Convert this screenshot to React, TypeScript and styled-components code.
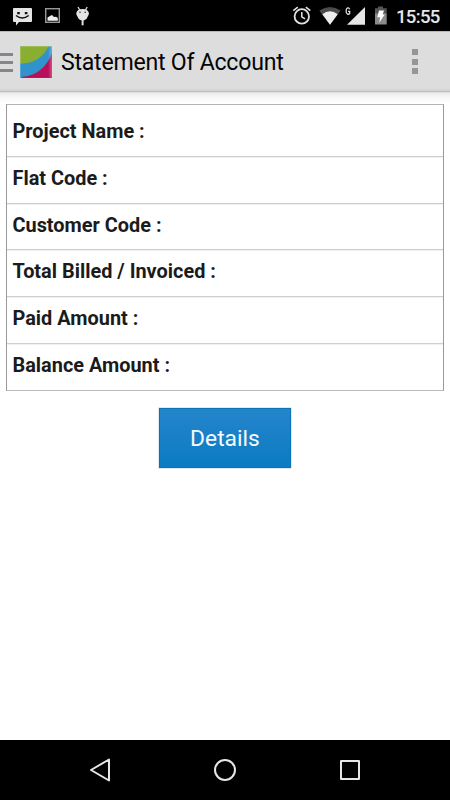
import React from 'react';
import styled, { createGlobalStyle } from 'styled-components';

const GlobalStyle = createGlobalStyle`
  * { box-sizing: border-box; }
  body { margin: 0; background: #fff; font-family: Roboto, "Liberation Sans", sans-serif; }
`;

const Screen = styled.div`
  display: flex;
  flex-direction: column;
  width: 450px;
  height: 800px;
  overflow: hidden;
  background: #fff;
`;

const StatusBar = styled.header`
  display: flex;
  flex: none;
  justify-content: space-between;
  height: 31px;
  background: #000;
`;

const Clock = styled.time`
  width: 54px;
  color: #e6e6e6;
  font-size: 18.6px;
  font-weight: 500;
  letter-spacing: -0.7px;
  line-height: 34px;
  white-space: nowrap;
`;

const StatusGroup = styled.div`
  display: flex;
`;

const AppBar = styled.div`
  display: flex;
  flex: none;
  align-items: center;
  height: 61px;
  padding-top: 1px;
  background: #ddd;
  border-top: 1px solid #b8b8b8;
  border-bottom: 1px solid #bebebe;
  box-shadow: inset 0 -2px 0 #d5d5d5;
`;

const DrawerIcon = styled.div`
  display: flex;
  flex-direction: column;
  gap: 5px;
  width: 13px;
  margin-right: 7px;
`;

const DrawerLine = styled.span`
  height: 3px;
  background: #86868a;
`;

const Title = styled.h1`
  flex: 1;
  margin: 1px 0 0 9px;
  color: #050505;
  font-size: 23.1px;
  font-weight: 400;
  letter-spacing: -0.24px;
  line-height: 30px;
  white-space: nowrap;
`;

const OverflowMenu = styled.button`
  display: flex;
  flex-direction: column;
  gap: 3.5px;
  margin: 0 32px 1px 0;
  padding: 0;
  border: 0;
  background: none;
`;

const Dot = styled.span`
  width: 6px;
  height: 6px;
  background: #969696;
`;

const Content = styled.main`
  display: flex;
  flex: 1;
  flex-direction: column;
  align-items: center;
  padding-top: 12px;
  background: linear-gradient(#dedede 0, #f0f0f0 2px, #f8f8f8 6px, #fff 12px);
`;

const Account = styled.div`
  width: 438px;
  border: 1px solid #999;
  border-top-color: #b4b4b4;
  border-bottom-color: #bbb;
  background: #fff;
`;

const Row = styled.div<{ $first?: boolean; $height: number }>`
  height: ${(p) => p.$height}px;
  padding: ${(p) => (p.$first ? 14 : 9)}px 0 0 5.5px;
  border-bottom: 1px solid #cfcfcf;
  box-shadow: 0 1px 0 #f1f1f1;
  color: #1b1b1b;
  font-size: 19.9px;
  font-weight: 700;
  line-height: 25px;
  white-space: nowrap;
  &:last-child { border-bottom: 0; box-shadow: none; }
`;

const DetailsButton = styled.button`
  width: 132px;
  height: 60px;
  margin-top: 17px;
  padding: 0;
  border: 1px solid #0b74b8;
  background: linear-gradient(#2585cb, #0b7bc2);
  box-shadow: 0 0 0 0.5px #bdd0dc;
  color: #f4faff;
  font: 400 22.8px Roboto, "Liberation Sans", sans-serif;
`;

const NavBar = styled.nav`
  flex: none;
  height: 60px;
  background: #000;
`;

const Icon = styled.svg`
  display: block;
  flex: none;
`;

const rows = [
  { label: 'Project Name :', height: 52 },
  { label: 'Flat Code :', height: 47 },
  { label: 'Customer Code :', height: 46 },
  { label: 'Total Billed / Invoiced :', height: 47 },
  { label: 'Paid Amount :', height: 47 },
  { label: 'Balance Amount :', height: 46 },
];

const Notifications = () => (
  <Icon width="110" height="31" viewBox="0 0 110 31">
    <path d="M14 8H31Q32 8 32 9V21Q32 22 31 22H19L16 25.5V22H14Q13 22 13 21V9Q13 8 14 8Z" fill="#e4e4e4" />
    <path d="M17.2 12h2.6v2.2h-2.6zM24.8 12h2.6v2.2h-2.6z" fill="#111" />
    <path d="M16 15.5Q22.3 20.5 28.7 15.5" fill="none" stroke="#111" strokeWidth="1.5" />
    <rect x="45.7" y="8.7" width="13.6" height="13.6" fill="none" stroke="#999" strokeWidth="1.4" />
    <path d="M47.5 20.7V17.5L50 16L52 15L54 17L56 16.7L57.8 18V20.7Z" fill="#eee" />
    <path d="M78 7L80 10.5M87.2 7L85.2 10.5" stroke="#ddd" strokeWidth="1.3" />
    <path d="M76.3 13C77 10.5 79 9 82.6 9S88.2 10.5 88.9 13C89.2 14.8 87.8 16 87.5 17C86.8 19.3 85 20.5 82.6 20.5S78.4 19.3 77.7 17C77.4 16 76 14.8 76.3 13Z" fill="#e4e4e4" />
    <circle cx="80" cy="12.3" r="0.8" fill="#333" />
    <circle cx="85.2" cy="12.3" r="0.8" fill="#333" />
    <path d="M82.6 20V25.3" stroke="#ddd" strokeWidth="2" />
  </Icon>
);

const SystemStatus = () => (
  <Icon width="116" height="31" viewBox="280 0 116 31">
    <g fill="none" stroke="#e2e2e2">
      <circle cx="301.8" cy="16.4" r="7.2" strokeWidth="1.8" />
      <path d="M301.8 12V16.8L305 18.8" strokeWidth="1.5" />
      <path d="M293.3 10.7L297.8 7.2M310.3 10.7L305.8 7.2" strokeWidth="1.6" />
    </g>
    <path d="M319.3 10.5Q330 3.3 340.7 10.5L330 24.7Z" fill="#4b4b4b" />
    <path d="M322.3 14.2Q330 8.5 337.7 14.2L330 24.7Z" fill="#eee" />
    <path d="M349.7 9.2C348.9 7.2 346.1 7.2 346.1 11S348.6 14.8 349.7 13.3V11.3H348" fill="none" stroke="#e0e0e0" strokeWidth="1.3" />
    <path d="M365 7V24.7H347Z" fill="#e6e6e6" />
    <path d="M375 8.2H378V6.5H383V8.2H386.7V14H375Z" fill="#555" />
    <path d="M375 13.5H386.7V24.5H375Z" fill="#8b8b8b" />
    <path d="M379 10.5H384L382.7 14.4H384.7L379.2 22.8L380.2 17.3H377.3Z" fill="#fff" />
  </Icon>
);

const Logo = () => (
  <Icon width="32" height="32" viewBox="0 0 32 32">
    <defs>
      <clipPath id="logoShape"><rect width="32" height="32" rx="1.2" /></clipPath>
      <linearGradient id="logoEdge" x1="0" x2="1"><stop offset=".88" stopColor="#fff" stopOpacity="0" /><stop offset="1" stopColor="#fff" stopOpacity=".28" /></linearGradient>
    </defs>
    <g clipPath="url(#logoShape)">
      <rect width="32" height="32" fill="#3193cc" />
      <path d="M0 0H29C23 11 14 17.5 0 17.7Z" fill="#8aae31" />
      <path d="M32 7C27 20 18 29.5 2 31V32H32Z" fill="#b90e58" />
      <rect width="32" height="32" fill="url(#logoEdge)" />
      <path d="M0 31.5H32" stroke="#803b70" strokeOpacity=".45" />
      <path d="M0 .5H32M.5 0V32" stroke="#fff" strokeOpacity=".18" />
    </g>
  </Icon>
);

export default function App() {
  return (
    <>
      <GlobalStyle />
      <Screen>
        <StatusBar>
          <Notifications />
          <StatusGroup>
            <SystemStatus />
            <Clock>15:55</Clock>
          </StatusGroup>
        </StatusBar>
        <AppBar>
          <DrawerIcon><DrawerLine /><DrawerLine /><DrawerLine /></DrawerIcon>
          <Logo />
          <Title>Statement Of Account</Title>
          <OverflowMenu aria-label="More options"><Dot /><Dot /><Dot /></OverflowMenu>
        </AppBar>
        <Content>
          <Account>
            {rows.map((row, index) => (
              <Row key={row.label} $first={index === 0} $height={row.height}>{row.label}</Row>
            ))}
          </Account>
          <DetailsButton>Details</DetailsButton>
        </Content>
        <NavBar>
          <Icon width="450" height="60" viewBox="0 0 450 60" fill="none" stroke="#e6e6e6" strokeWidth="2" strokeLinejoin="round">
            <path d="M91 30L109 19.5V40.5Z" />
            <circle cx="225" cy="30" r="10" />
            <rect x="341" y="21" width="18" height="18" />
          </Icon>
        </NavBar>
      </Screen>
    </>
  );
}
